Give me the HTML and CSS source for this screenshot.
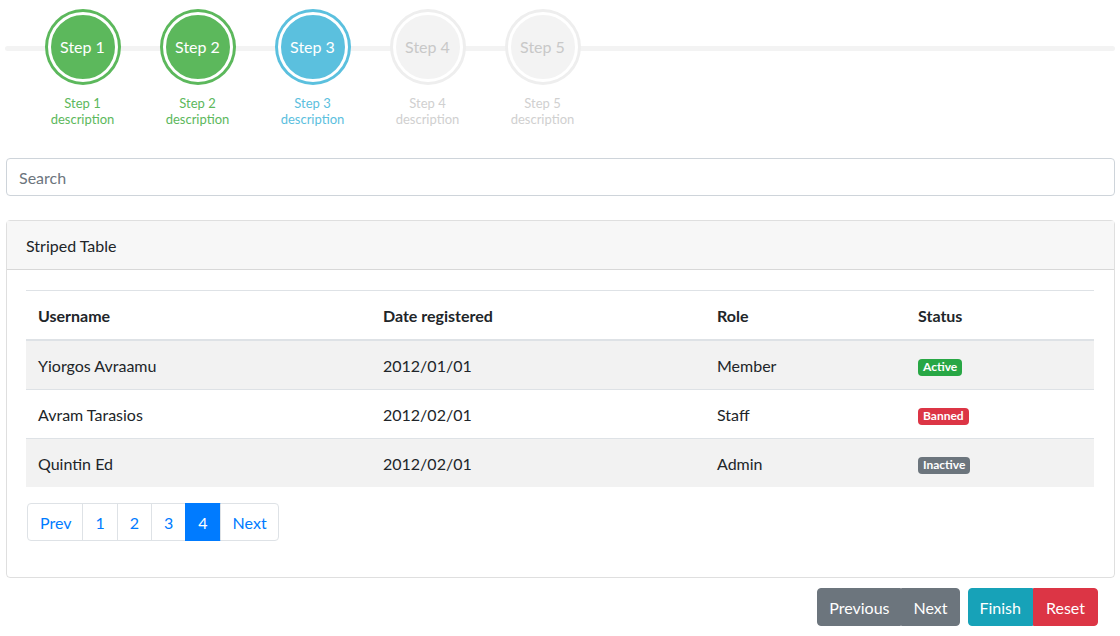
FILE: index.html
```html
<!DOCTYPE html>
<html lang="en">
<head>
    <meta charset="UTF-8">
    <meta name="viewport" content="width=device-width, initial-scale=1.0">
    <title>Wizard</title>
    <link rel="stylesheet" href="styles.css">
</head>
<body>
    <div class="page">
        <div class="stepper">
            <div class="step done">
                <div class="step-circle">Step 1</div>
                <div class="step-desc">Step 1<br>description</div>
            </div>
            <div class="step done">
                <div class="step-circle">Step 2</div>
                <div class="step-desc">Step 2<br>description</div>
            </div>
            <div class="step current">
                <div class="step-circle">Step 3</div>
                <div class="step-desc">Step 3<br>description</div>
            </div>
            <div class="step">
                <div class="step-circle">Step 4</div>
                <div class="step-desc">Step 4<br>description</div>
            </div>
            <div class="step">
                <div class="step-circle">Step 5</div>
                <div class="step-desc">Step 5<br>description</div>
            </div>
        </div>

        <input type="text" class="search" placeholder="Search">

        <div class="card">
            <div class="card-header">Striped Table</div>
            <div class="card-body">
                <table class="table">
                    <colgroup>
                        <col style="width: 345px">
                        <col style="width: 334px">
                        <col style="width: 201px">
                        <col>
                    </colgroup>
                    <thead>
                        <tr>
                            <th>Username</th>
                            <th>Date registered</th>
                            <th>Role</th>
                            <th>Status</th>
                        </tr>
                    </thead>
                    <tbody>
                        <tr>
                            <td>Yiorgos Avraamu</td>
                            <td>2012/01/01</td>
                            <td>Member</td>
                            <td><span class="badge badge-success">Active</span></td>
                        </tr>
                        <tr>
                            <td>Avram Tarasios</td>
                            <td>2012/02/01</td>
                            <td>Staff</td>
                            <td><span class="badge badge-danger">Banned</span></td>
                        </tr>
                        <tr>
                            <td>Quintin Ed</td>
                            <td>2012/02/01</td>
                            <td>Admin</td>
                            <td><span class="badge badge-secondary">Inactive</span></td>
                        </tr>
                    </tbody>
                </table>

                <ul class="pagination">
                    <li class="page-item"><a class="page-link" href="#">Prev</a></li>
                    <li class="page-item"><a class="page-link" href="#">1</a></li>
                    <li class="page-item"><a class="page-link" href="#">2</a></li>
                    <li class="page-item"><a class="page-link" href="#">3</a></li>
                    <li class="page-item active"><a class="page-link" href="#">4</a></li>
                    <li class="page-item"><a class="page-link" href="#">Next</a></li>
                </ul>
            </div>
        </div>

        <div class="toolbar">
            <div class="btn-group">
                <button class="btn btn-secondary">Previous</button>
                <button class="btn btn-secondary">Next</button>
            </div>
            <div class="btn-group">
                <button class="btn btn-info">Finish</button>
                <button class="btn btn-danger">Reset</button>
            </div>
        </div>
    </div>
</body>
</html>
```

FILE: styles.css
```css
:root {
    --green: #5cb85c;
    --blue: #5bc0de;
    --muted: #f3f3f3;
    --text: #212529;
    --border: #dee2e6;
    --primary: #007bff;
    --radius: 4px;
}

* {
    box-sizing: border-box;
}

body {
    margin: 0;
    font-family: Lato, "Liberation Sans", sans-serif;
    font-size: 16px;
    line-height: 1.5;
    color: var(--text);
    background: white;
}

.page {
    margin: 0 5px 0 6px;
}

/* stepper */
.stepper {
    position: relative;
    display: flex;
    padding: 12px 0 0 19px;
}

.stepper::before {
    content: "";
    position: absolute;
    left: -1px;
    right: 0;
    top: 46px;
    height: 5px;
    border-radius: 3px;
    background: var(--muted);
}

.step {
    position: relative;
    width: 115px;
    display: flex;
    flex-direction: column;
    align-items: center;
    color: #d0d0d0;
}

.step-circle {
    width: 70px;
    height: 70px;
    border-radius: 50%;
    border: 3px solid white;
    background: var(--muted);
    box-shadow: 0 0 0 3px #eeeeee;
    display: flex;
    align-items: center;
    justify-content: center;
    font-size: 16px;
    color: #c8c8c8;
}

.step-desc {
    margin-top: 13px;
    font-size: 13px;
    line-height: 16px;
    text-align: center;
}

.step.done { color: var(--green); }
.step.done .step-circle {
    background: var(--green);
    box-shadow: 0 0 0 3px var(--green);
    color: white;
}

.step.current { color: var(--blue); }
.step.current .step-circle {
    background: var(--blue);
    box-shadow: 0 0 0 3px var(--blue);
    color: white;
}

/* search */
.search {
    display: block;
    width: 100%;
    height: 38px;
    margin-top: 31px;
    padding: 6px 12px;
    border: 1px solid #ced4da;
    border-radius: var(--radius);
    font-family: inherit;
    font-size: 16px;
    color: #495057;
}

.search::placeholder {
    color: #6c757d;
}

/* card */
.card {
    margin-top: 24px;
    border: 1px solid rgba(0, 0, 0, 0.125);
    border-radius: var(--radius);
}

.card-header {
    padding: 13px 19px 11px;
    background: #f7f7f7;
    border-bottom: 1px solid rgba(0, 0, 0, 0.125);
}

.card-body {
    padding: 20px 20px 20px 19px;
}

.table {
    width: 100%;
    border-collapse: collapse;
    table-layout: fixed;
    margin-bottom: 16px;
}

.table th,
.table td {
    padding: 13px 12px 11px;
    text-align: left;
    border-top: 1px solid var(--border);
    vertical-align: top;
}

.table th {
    font-weight: bold;
    border-bottom: 2px solid var(--border);
}

.table tbody tr:nth-child(odd) {
    background: #f2f2f2;
}

.badge {
    display: inline-block;
    padding: 2px 5px 3px;
    font-size: 12px;
    font-weight: bold;
    line-height: 1;
    color: white;
    border-radius: var(--radius);
    vertical-align: 1px;
}

.badge-success { background: #28a745; }
.badge-danger { background: #dc3545; }
.badge-secondary { background: #6c757d; }

/* pagination */
.pagination {
    display: flex;
    list-style: none;
    margin: 0 0 16px 1px;
    padding: 0;
}

.page-link {
    display: block;
    margin-left: -1px;
    padding: 9px 12px 7px;
    line-height: 1.25;
    color: var(--primary);
    text-decoration: none;
    border: 1px solid var(--border);
}

.page-item:first-child .page-link {
    margin-left: 0;
    padding-right: 11px;
    border-radius: var(--radius) 0 0 var(--radius);
}

.page-item:last-child .page-link {
    padding-right: 11px;
    border-radius: 0 var(--radius) var(--radius) 0;
}

.page-item.active .page-link {
    background: var(--primary);
    border-color: var(--primary);
    color: white;
}

/* buttons */
.toolbar {
    display: flex;
    justify-content: flex-end;
    gap: 8px;
    margin: 10px 17px 0 0;
}

.btn-group {
    display: flex;
}

.btn {
    padding: 7px 12px 5px;
    border: 1px solid transparent;
    font-family: inherit;
    font-size: 16px;
    line-height: 24px;
    color: white;
    cursor: pointer;
}

.btn-group .btn:first-child {
    border-radius: var(--radius) 0 0 var(--radius);
}

.btn-group .btn:last-child {
    border-radius: 0 var(--radius) var(--radius) 0;
}

.btn-secondary { background: #6c757d; border-color: #6c757d; padding-left: 11px; padding-right: 11px; }
.btn-info { background: #17a2b8; border-color: #17a2b8; padding-left: 11px; padding-right: 11px; }
.btn-danger { background: #dc3545; border-color: #dc3545; }
```
